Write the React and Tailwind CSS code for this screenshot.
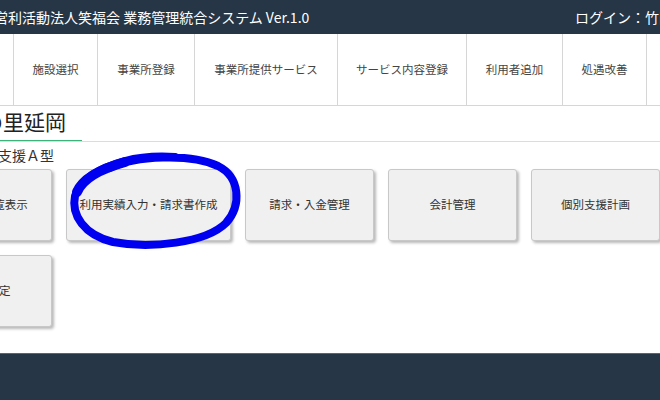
import React from "react";

const navItems = [
  { label: "", w: "w-[14px]" },
  { label: "施設選択", w: "w-[84px]" },
  { label: "事業所登録", w: "w-[97px]" },
  { label: "事業所提供サービス", w: "w-[143px]" },
  { label: "サービス内容登録", w: "w-[129px]" },
  { label: "利用者追加", w: "w-[96px]" },
  { label: "処遇改善", w: "w-[84px]" },
  { label: "", w: "w-[96px]" },
];

function Btn({ children, w = "w-[129px]" }) {
  return (
    <div
      className={`${w} h-[72px] shrink-0 flex items-center justify-center rounded-[3px] border border-[#c8c8c8] bg-[#f0f0f0] text-[11.5px] text-[#333] shadow-[2px_2px_3px_rgba(0,0,0,0.28)] whitespace-nowrap`}
    >
      {children}
    </div>
  );
}

export default function App() {
  return (
    <div
      className="relative w-[660px] h-[400px] overflow-hidden bg-white flex flex-col"
      style={{ fontFamily: '"Noto Sans CJK JP", "Noto Sans", sans-serif' }}
    >
      <header className="h-[34px] shrink-0 bg-[#263646] text-white text-[14px] flex items-center justify-between overflow-hidden whitespace-nowrap">
        <span className="ml-[-20px]">非営利活動法人笑福会 業務管理統合システム Ver.1.0</span>
        <span className="w-[85px] shrink-0 overflow-hidden">ログイン：竹田 様</span>
      </header>

      <nav className="h-[72px] shrink-0 flex border-b border-[#d6d6d6] overflow-hidden">
        {navItems.map((n, i) => (
          <div
            key={i}
            className={`${n.w} shrink-0 h-full flex items-center justify-center border-r border-[#d6d6d6] text-[11.5px] text-[#444] whitespace-nowrap`}
          >
            {n.label}
          </div>
        ))}
      </nav>

      <div className="h-[36px] shrink-0 flex items-end border-b border-[#dcdcdc] overflow-hidden">
        <span className="ml-[-18px] -mb-px pr-[16px] pb-[5px] border-b-2 border-[#3cb37a] text-[21px] leading-[28px] text-[#222] whitespace-nowrap">
          の里延岡
        </span>
      </div>

      <div className="mt-[3px] ml-[-58px] text-[14px] leading-[20px] text-[#333] whitespace-nowrap">
        就労継続支援Ａ型
      </div>

      <div className="mt-[4px] ml-[-77px] flex gap-[14px]">
        <Btn>利用者一覧表示</Btn>
        <Btn w="w-[165px]">利用実績入力・請求書作成</Btn>
        <Btn>請求・入金管理</Btn>
        <Btn>会計管理</Btn>
        <Btn>個別支援計画</Btn>
      </div>
      <div className="mt-[14px] ml-[-77px] flex gap-[14px]">
        <Btn>各種設定</Btn>
      </div>

      <div className="flex-1" />
      <footer className="h-[47px] shrink-0 bg-[#263646] border-t border-[#5a6572]" />

      <svg
        className="absolute inset-0 pointer-events-none"
        width="660"
        height="400"
        viewBox="0 0 660 400"
      >
        <g fill="none" stroke="#0000f0" strokeLinecap="round" strokeLinejoin="round">
          <path
            strokeWidth="8"
            d="M 110 168 C 135 156, 190 153, 218 166 C 240 177, 242 205, 226 223 C 206 243, 150 249, 113 242 C 84 235, 71 215, 75 196 C 81 178, 100 168, 125 161 C 140 157, 160 156, 175 157"
          />
          <path
            strokeWidth="10"
            d="M 77 192 C 83 178, 100 169, 125 162"
          />
        </g>
      </svg>
    </div>
  );
}
